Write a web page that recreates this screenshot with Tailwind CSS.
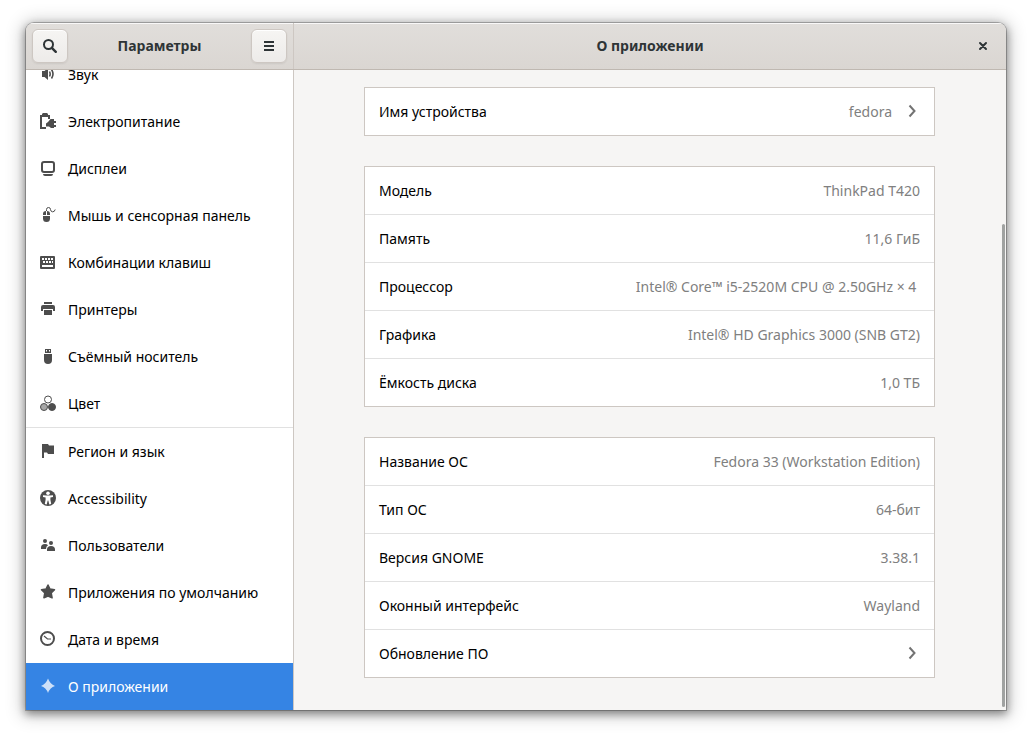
<!DOCTYPE html>
<html lang="ru">
<head>
<meta charset="utf-8">
<meta name="viewport" content="width=device-width, initial-scale=1">
<title>Параметры</title>
<script src="https://cdn.jsdelivr.net/npm/@tailwindcss/browser@4"></script>
</head>
<body class="bg-white font-['Noto_Sans','Open_Sans',sans-serif] text-sm text-black">
<div class="h-screen px-[26px] pt-[23px] pb-[29px]">
<div class="flex h-full flex-col overflow-hidden rounded-t-lg bg-[#f6f5f4] shadow-[0_3px_9px_1px_rgba(0,0,0,0.4),0_2px_18px_4px_rgba(0,0,0,0.2),0_0_0_1px_rgba(0,0,0,0.23)]">

  <header class="flex h-[47px] shrink-0 border-b border-[#bfb8b1] bg-linear-to-b from-[#e1dedb] to-[#dad6d2] font-bold text-[#2e3436] shadow-[inset_0_1px_#f9f8f8]">
    <div class="flex w-[268px] shrink-0 items-center justify-between border-r border-[#cdc7c2] px-1.5">
      <button type="button" aria-label="Поиск" class="flex h-[34px] w-9 items-center justify-center rounded-md border border-[#cdc7c2] bg-linear-to-b from-[#f6f5f3] to-[#edebe9] shadow-[inset_0_1px_#fff,0_1px_2px_rgba(0,0,0,0.07)]">
        <svg class="size-4" viewBox="0 0 16 16" fill="none" stroke="currentColor" stroke-width="2"><circle cx="6.500" cy="6.500" r="4.500"/><path d="M9.800 9.800l4 4" stroke-width="2.400" stroke-linecap="round"/></svg>
      </button>
      <h2>Параметры</h2>
      <button type="button" aria-label="Меню" class="flex h-[34px] w-9 items-center justify-center rounded-md border border-[#cdc7c2] bg-linear-to-b from-[#f6f5f3] to-[#edebe9] shadow-[inset_0_1px_#fff,0_1px_2px_rgba(0,0,0,0.07)]">
        <svg class="size-4" viewBox="0 0 16 16" fill="currentColor"><path d="M3 3h10v2H3zM3 7h10v2H3zM3 11h10v2H3z"/></svg>
      </button>
    </div>
    <div class="grid flex-1 grid-cols-[1fr_auto_1fr] items-center">
      <h1 class="col-start-2">О приложении</h1>
      <button type="button" aria-label="Закрыть" class="mr-[15px] justify-self-end">
        <svg class="size-4" viewBox="0 0 16 16" fill="none" stroke="currentColor" stroke-width="2" stroke-linecap="round"><path d="M5 5l6 6M11 5l-6 6"/></svg>
      </button>
    </div>
  </header>

  <div class="flex min-h-0 flex-1">
    <nav aria-label="Разделы" class="flex w-[268px] shrink-0 flex-col justify-end overflow-hidden border-r border-[#cdc7c2] bg-white">
      <a href="#sound" class="flex h-[47px] shrink-0 items-center gap-3 px-3.5">
        <svg class="mb-px size-4 text-[#4d4d4d]" viewBox="0 0 16 16" fill="currentColor"><path d="M2 5h2.500L8 2v12L4.500 11H2z"/><path d="M9.500 5.500q1.300 2.500 0 5M11.500 3.500q3 4.500 0 9" fill="none" stroke="currentColor" stroke-width="1.600"/></svg>
        <span>Звук</span></a>
      <a href="#power" class="flex h-[47px] shrink-0 items-center gap-3 px-3.5">
        <svg class="mb-px size-4 text-[#4d4d4d]" viewBox="0 0 16 16" fill="currentColor"><path d="M0 2h2V1l1-1h4l1 1v1h2v4H8V4H2v10h4v2H0z"/><path d="M14 6v2h2v2h-2v2h2v2h-2v1h-3l-2-1.500H6v-3l2-1.500 2.500-3z"/></svg>
        <span>Электропитание</span></a>
      <a href="#displays" class="flex h-[47px] shrink-0 items-center gap-3 px-3.5">
        <svg class="mb-px size-4 text-[#4d4d4d]" viewBox="0 0 16 16" fill="currentColor"><rect x="2" y="2" width="12" height="10" rx="2" fill="none" stroke="currentColor" stroke-width="2"/><path d="M3 14h10q0 2-2 2H5q-2 0-2-2z"/></svg>
        <span>Дисплеи</span></a>
      <a href="#mouse" class="flex h-[47px] shrink-0 items-center gap-3 px-3.5">
        <svg class="mb-px size-4 text-[#4d4d4d]" viewBox="0 0 16 16" fill="currentColor"><path d="M6 4v4H3V7q0-3 3-3zM7 4q3 0 3 3v1H7zM3 9h7v2.500a3.500 3.500 0 0 1-7 0z"/><path d="M6.500 4V2.500q0-2 2-2t2 2 2 2.300 2.700-2.300" fill="none" stroke="currentColor"/></svg>
        <span>Мышь и сенсорная панель</span></a>
      <a href="#keyboard" class="flex h-[47px] shrink-0 items-center gap-3 px-3.5">
        <svg class="mb-px size-4 text-[#4d4d4d]" viewBox="0 0 16 16" fill="currentColor"><path fill-rule="evenodd" d="M1 2h13q1 0 1 1v11q0 1-1 1H1q-1 0-1-1V3q0-1 1-1zM2 4v2h2V4zM5 4v2h2V4zM8 4v2h2V4zM11 4v2h2V4zM3 7v2h2V7zM6 7v2h2V7zM9 7v2h2V7zM12 7v2h1V7zM2 11v2h11v-2z"/></svg>
        <span>Комбинации клавиш</span></a>
      <a href="#printers" class="flex h-[47px] shrink-0 items-center gap-3 px-3.5">
        <svg class="mb-px size-4 text-[#4d4d4d]" viewBox="0 0 16 16" fill="currentColor"><path d="M4 1h8v2H4zM3 4h10q2 0 2 2v4h-2V8H3v2H1V6q0-2 2-2z"/><path d="M4 9h8v5H4z"/></svg>
        <span>Принтеры</span></a>
      <a href="#removable" class="flex h-[47px] shrink-0 items-center gap-3 px-3.5">
        <svg class="mb-px size-4 text-[#4d4d4d]" viewBox="0 0 16 16" fill="currentColor"><path fill-rule="evenodd" d="M5 1h6v4H5zM6 2v1.500h1V2zM9 2v1.500h1V2z"/><path d="M4 6h8v6a4 4 0 0 1-8 0z"/></svg>
        <span>Съёмный носитель</span></a>
      <a href="#color" class="flex h-[47px] shrink-0 items-center gap-3 px-3.5">
        <svg class="mb-px size-4 text-[#4d4d4d]" viewBox="0 0 16 16" fill="none" stroke="currentColor"><circle cx="8" cy="4.500" r="3.500"/><circle cx="4" cy="12" r="3.500" fill="#a6a6a6"/><circle cx="12" cy="12" r="3.500" fill="currentColor"/></svg>
        <span>Цвет</span></a>
      <a href="#region" class="flex h-12 shrink-0 items-center gap-3 border-t border-[#e1e1e1] px-3.5">
        <svg class="mb-px size-4 text-[#4d4d4d]" viewBox="0 0 16 16" fill="currentColor"><path d="M2 1h6l1 1.500h5v8.500H8L7 9.500H4V15H2z"/></svg>
        <span>Регион и язык</span></a>
      <a href="#accessibility" class="flex h-[47px] shrink-0 items-center gap-3 px-3.5">
        <svg class="mb-px size-4 text-[#4d4d4d]" viewBox="0 0 16 16" fill="currentColor"><circle cx="8" cy="8" r="8"/><g fill="#fff"><circle cx="8" cy="3.300" r="1.800"/><path d="M3 5.200l3.500.3h3l3.500-.3v1.800l-2.600.5v2.300l.8 4.200-1.900.4L8.300 10.500h-.6l-1 3.900-1.900-.4.8-4.200V7.500L3 7z"/></g></svg>
        <span>Accessibility</span></a>
      <a href="#users" class="flex h-[47px] shrink-0 items-center gap-3 px-3.5">
        <svg class="mb-px size-4 text-[#4d4d4d]" viewBox="0 0 16 16" fill="currentColor"><circle cx="5" cy="4" r="2"/><circle cx="11" cy="6" r="2"/><path d="M1 12v-1.500q0-3.500 4-3.500 2 0 3 1.200-2 1.300-2 3.800zM7 14v-1.500q0-3.500 4-3.500t4 3.500V14z"/></svg>
        <span>Пользователи</span></a>
      <a href="#default-apps" class="flex h-[47px] shrink-0 items-center gap-3 px-3.5">
        <svg class="mb-px size-4 text-[#4d4d4d]" viewBox="0 0 16 16" fill="currentColor" stroke="currentColor" stroke-width="1.500" stroke-linejoin="round"><path d="M8 1l2 4 4.500.7-3.300 3.200.9 4.900L8 12l-4.100 1.800.9-4.900L1.500 5.700 6 5z"/></svg>
        <span>Приложения по умолчанию</span></a>
      <a href="#date-time" class="flex h-[47px] shrink-0 items-center gap-3 px-3.5">
        <svg class="mb-px size-4 text-[#4d4d4d]" viewBox="0 0 16 16" fill="none" stroke="currentColor"><circle cx="7.500" cy="7.500" r="6.500" stroke-width="2"/><path d="M4 5l3.500 3H11" stroke-width="1.200"/></svg>
        <span>Дата и время</span></a>
      <a href="#about" aria-current="page" class="flex h-[47px] shrink-0 items-center gap-3 bg-[#3584e4] px-3.5 text-white">
        <svg class="mb-px size-4 text-[#cde0f8]" viewBox="0 0 16 16" fill="currentColor"><path d="M8 .5q2 5.500 7 7.500-5 1.500-7 7-2-5.500-7-7 5-2 7-7.500z"/></svg>
        <span>О приложении</span></a>
    </nav>

    <main class="relative flex min-w-0 flex-1 flex-col justify-end gap-[30px] overflow-hidden pr-[71px] pb-8 pl-[70px]">
      <button type="button" class="flex h-[49px] items-center border border-[#cdc7c2] bg-white px-3.5 text-left">
        <span class="flex-1">Имя устройства</span>
        <span class="text-[#808080]">fedora</span>
        <svg class="mb-px ml-3 size-4 text-[#737373]" viewBox="0 0 16 16" fill="none" stroke="currentColor" stroke-width="2"><path d="M5.500 2.500l5 5.500-5 5.500"/></svg>
      </button>

      <dl class="divide-y divide-[#e1e1e1] border border-[#cdc7c2] bg-white *:flex *:h-12 *:items-center *:justify-between *:px-3.5 *:last:h-[47px]">
        <div><dt>Модель</dt><dd class="text-[#808080]">ThinkPad T420</dd></div>
        <div><dt>Память</dt><dd class="text-[#808080]">11,6 ГиБ</dd></div>
        <div><dt>Процессор</dt><dd class="text-[#808080]">Intel® Core™ i5-2520M CPU @ 2.50GHz × 4&nbsp;</dd></div>
        <div><dt>Графика</dt><dd class="text-[#808080]">Intel® HD Graphics 3000 (SNB GT2)</dd></div>
        <div><dt>Ёмкость диска</dt><dd class="text-[#808080]">1,0 ТБ</dd></div>
      </dl>

      <div class="border border-[#cdc7c2] bg-white">
        <dl class="divide-y divide-[#e1e1e1] *:flex *:h-12 *:items-center *:justify-between *:px-3.5 *:last:h-[47px]">
          <div><dt>Название ОС</dt><dd class="text-[#808080]">Fedora 33 (Workstation Edition)</dd></div>
          <div><dt>Тип ОС</dt><dd class="text-[#808080]">64-бит</dd></div>
          <div><dt>Версия GNOME</dt><dd class="text-[#808080]">3.38.1</dd></div>
          <div><dt>Оконный интерфейс</dt><dd class="text-[#808080]">Wayland</dd></div>
        </dl>
        <button type="button" class="flex h-12 w-full items-center justify-between border-t border-[#e1e1e1] px-3.5 text-left">
          <span>Обновление ПО</span>
          <svg class="mb-px size-4 text-[#737373]" viewBox="0 0 16 16" fill="none" stroke="currentColor" stroke-width="2"><path d="M5.500 2.500l5 5.500-5 5.500"/></svg>
        </button>
      </div>
      <div class="absolute top-[154px] right-px bottom-[3px] w-[3px] rounded-full bg-[#a0a2a1]"></div>
    </main>
  </div>
</div>
</div>
</body>
</html>
